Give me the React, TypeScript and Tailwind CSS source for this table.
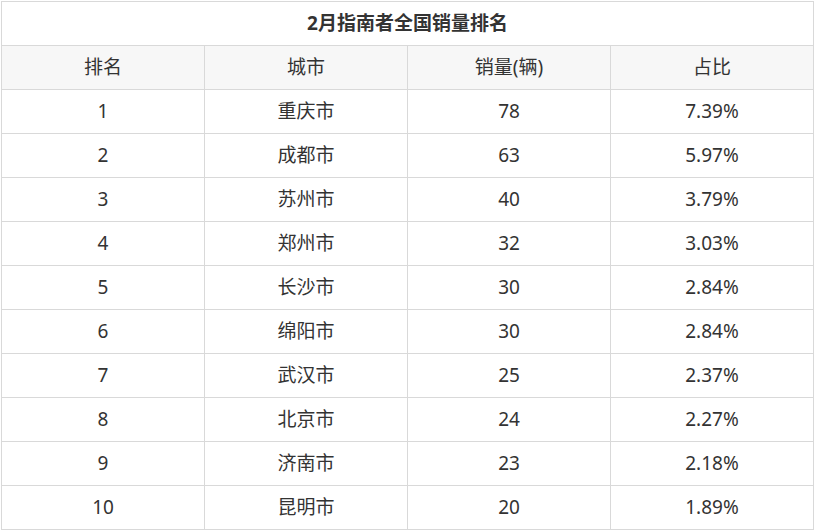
const rows = [
  ["1", "重庆市", "78", "7.39%"],
  ["2", "成都市", "63", "5.97%"],
  ["3", "苏州市", "40", "3.79%"],
  ["4", "郑州市", "32", "3.03%"],
  ["5", "长沙市", "30", "2.84%"],
  ["6", "绵阳市", "30", "2.84%"],
  ["7", "武汉市", "25", "2.37%"],
  ["8", "北京市", "24", "2.27%"],
  ["9", "济南市", "23", "2.18%"],
  ["10", "昆明市", "20", "1.89%"],
];

const cell = "border border-[#d9d9d9] text-center align-middle h-[44px] p-0";

export default function App() {
  return (
    <div
      className="pl-px pt-px bg-white min-h-screen text-[#333] text-[19px]"
      style={{ fontFamily: '"Noto Sans", "Noto Sans CJK SC", sans-serif' }}
    >
      <table className="w-[813px] border-collapse table-fixed">
        <tbody>
          <tr>
            <td colSpan={4} className={`${cell} font-bold text-[#333]`}>
              2月指南者全国销量排名
            </td>
          </tr>
          <tr className="bg-[#f7f7f7]">
            <td className={cell}>排名</td>
            <td className={cell}>城市</td>
            <td className={cell}>销量(辆)</td>
            <td className={cell}>占比</td>
          </tr>
          {rows.map((r) => (
            <tr key={r[0]}>
              {r.map((c, i) => (
                <td key={i} className={cell}>
                  {c}
                </td>
              ))}
            </tr>
          ))}
        </tbody>
      </table>
    </div>
  );
}
